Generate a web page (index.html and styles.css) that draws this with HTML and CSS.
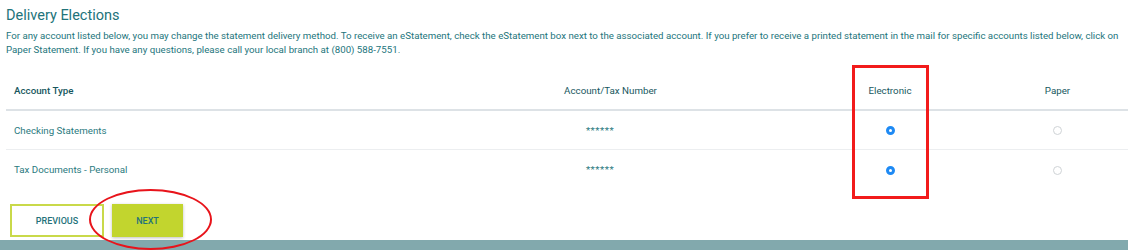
FILE: index.html
```html
<!DOCTYPE html>
<html lang="en">
  <head>
    <meta charset="UTF-8" />
    <meta name="viewport" content="width=device-width, initial-scale=1.0" />
    <title>Delivery Elections</title>
    <link rel="stylesheet" href="styles.css">
  </head>
  <body>
    <div class="page">
      <h1 class="page-title">Delivery Elections</h1>
      <p class="page-intro">For any account listed below, you may change the statement delivery method. To receive an eStatement, check the eStatement box next to the associated account. If you prefer to receive a printed statement in the mail for specific accounts listed below, click on Paper Statement. If you have any questions, please call your local branch at (800) 588-7551.</p>

      <div class="elections">
        <div class="row row-head">
          <div class="cell cell-type">Account Type</div>
          <div class="cell cell-number">Account/Tax Number</div>
          <div class="cell cell-choice">Electronic</div>
          <div class="cell cell-choice">Paper</div>
        </div>

        <div class="row">
          <div class="cell cell-type">Checking Statements</div>
          <div class="cell cell-number"><span class="masked">******</span></div>
          <div class="cell cell-choice"><span class="radio checked"></span></div>
          <div class="cell cell-choice"><span class="radio"></span></div>
        </div>

        <div class="row row-last">
          <div class="cell cell-type">Tax Documents - Personal</div>
          <div class="cell cell-number"><span class="masked">******</span></div>
          <div class="cell cell-choice"><span class="radio checked"></span></div>
          <div class="cell cell-choice"><span class="radio"></span></div>
        </div>

        <!-- annotation drawn over the Electronic column -->
        <div class="mark-box"></div>
      </div>

      <div class="actions">
        <button class="btn btn-prev">Previous</button>
        <button class="btn btn-next">Next</button>
        <!-- annotation drawn round the Next button -->
        <div class="mark-ring"></div>
      </div>
    </div>

    <div class="footer-band"></div>
  </body>
</html>
```

FILE: styles.css
```css
* {
  margin: 0;
  padding: 0;
  box-sizing: border-box;
}

html,
body {
  overflow: hidden;
}

body {
  font-family: Roboto, "Liberation Sans", sans-serif;
  background: #fff;
  width: 1128px;
  height: 250px;
  display: flex;
  flex-direction: column;
}

.page {
  padding-left: 6px;
  flex: 1;
}

.page-title {
  margin-top: 7px;
  font-size: 14.5px;
  line-height: 17px;
  font-weight: 400;
  color: #22737a;
}

.page-intro {
  margin-top: 5px;
  font-size: 9.7px;
  line-height: 13.5px;
  color: #23757c;
  padding-right: 2px;
}

.elections {
  position: relative;
  margin-top: 16px;
  width: 1130px;
}

.row {
  display: grid;
  grid-template-columns: 414px 381px 178px 157px;
  align-items: center;
  height: 39px;
  border-bottom: 1px solid #eceef0;
  font-size: 9.75px;
  color: #2a7a80;
}

.row-head {
  height: 39px;
  border-bottom: 2px solid #dde2e6;
  color: #17575e;
  font-weight: 400;
}

.row-head .cell-type {
  font-weight: 500;
}

.row-last {
  border-bottom: none;
}

.cell-type {
  padding-left: 8px;
}

.cell-number,
.cell-choice {
  text-align: center;
}

.masked {
  display: inline-block;
  margin-right: 21px;
  letter-spacing: 0.5px;
}

.radio {
  display: inline-block;
  width: 9px;
  height: 9px;
  border-radius: 50%;
  border: 1px solid #cfd3d6;
  background: #fff;
  vertical-align: middle;
}

.radio.checked {
  border: 3px solid #1e8af4;
}

.mark-box {
  position: absolute;
  left: 846px;
  top: -7px;
  width: 77px;
  height: 134px;
  border: 3px solid #f21b1b;
}

.actions {
  position: relative;
  display: flex;
  gap: 8px;
  margin-top: 15px;
  padding-left: 4px;
}

.btn {
  height: 33px;
  font-family: Roboto, "Liberation Sans", sans-serif;
  font-size: 9px;
  font-weight: 500;
  text-transform: uppercase;
  color: #24727a;
  cursor: pointer;
}

.btn-prev {
  width: 94px;
  background: #fff;
  border: 2px solid #c9d94a;
}

.btn-next {
  width: 71px;
  background: #c2d52e;
  border: none;
  box-shadow: 0 1px 3px rgba(0, 0, 0, 0.25);
}

.mark-ring {
  position: absolute;
  left: 83px;
  top: -15px;
  width: 123px;
  height: 61px;
  border: 2.5px solid #e8141b;
  border-radius: 50%;
  z-index: 2;
}

.footer-band {
  height: 10px;
  background: #82a9ad;
}
```
